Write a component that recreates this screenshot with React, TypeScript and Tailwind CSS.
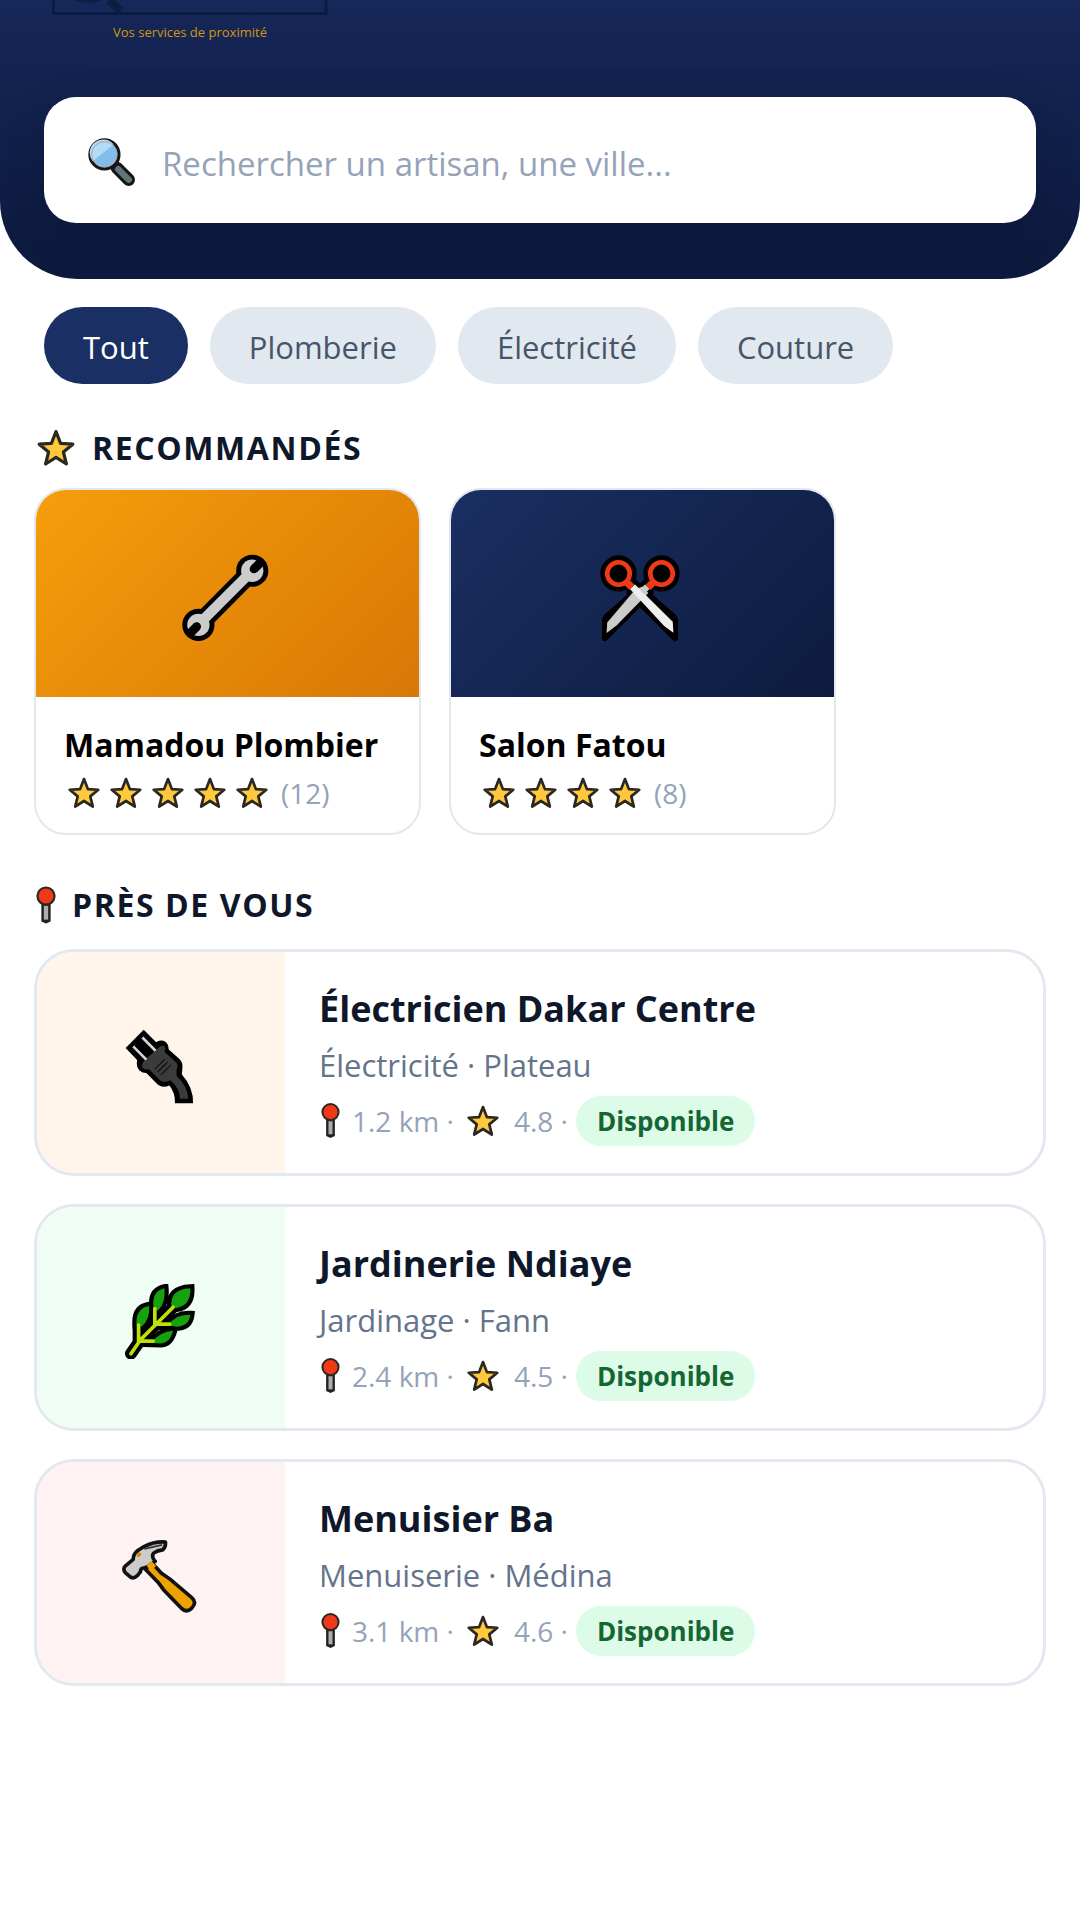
import { useState } from "react";

type IconProps = { className?: string };

const categories = ["Tout", "Plomberie", "Électricité", "Couture"];

const recommended = [
  {
    id: 1,
    name: "Mamadou Plombier",
    stars: 5,
    reviews: 12,
    Icon: WrenchIcon,
    bg: "bg-linear-135 from-[#f59e0b] to-[#d97706]",
  },
  {
    id: 2,
    name: "Salon Fatou",
    stars: 4,
    reviews: 8,
    Icon: ScissorsIcon,
    bg: "bg-linear-135 from-[#1a2f63] to-[#0d1b3e]",
  },
];

const nearby = [
  {
    id: 1,
    name: "Électricien Dakar Centre",
    info: "Électricité · Plateau",
    distance: "1.2 km",
    rating: "4.8",
    Icon: PlugIcon,
    bg: "bg-[#fff5eb]",
  },
  {
    id: 2,
    name: "Jardinerie Ndiaye",
    info: "Jardinage · Fann",
    distance: "2.4 km",
    rating: "4.5",
    Icon: LeafIcon,
    bg: "bg-[#f0fdf4]",
  },
  {
    id: 3,
    name: "Menuisier Ba",
    info: "Menuiserie · Médina",
    distance: "3.1 km",
    rating: "4.6",
    Icon: HammerIcon,
    bg: "bg-[#fef2f2]",
  },
];

function StarIcon({ className }: IconProps) {
  return (
    <svg viewBox="0 0 100 100" className={className} aria-hidden="true">
      <path
        d="M50 9 61.5 38.6 92 40.4 68.5 60 76 90 50 73.5 24 90 31.5 60 8 40.4 38.5 38.6Z"
        fill="#ffc83d"
        stroke="#2b2822"
        strokeWidth="8"
        strokeLinejoin="round"
      />
    </svg>
  );
}

function PinIcon({ className }: IconProps) {
  return (
    <svg viewBox="0 0 56 104" className={className} aria-hidden="true">
      <path d="M15 44H41V98L28 104 15 98Z" fill="#222" />
      <path d="M22 54H34V93H22Z" fill="#adadad" />
      <circle cx="28" cy="27" r="24" fill="#f03a17" stroke="#2b2822" strokeWidth="6" />
    </svg>
  );
}

function SearchIcon({ className }: IconProps) {
  return (
    <svg viewBox="262 411 146 150" className={className} aria-hidden="true">
      <path d="M350 504 386 540" stroke="#151515" strokeWidth="38" strokeLinecap="round" />
      <path d="M354 508 386 540" stroke="#5f7378" strokeWidth="20" strokeLinecap="round" />
      <circle cx="312" cy="463" r="44" fill="#82bdee" stroke="#151515" strokeWidth="10" />
      <path d="M276 484A40 40 0 0 1 340 433Z" fill="#b3daf6" />
      <circle cx="312" cy="463" r="39" fill="none" stroke="#a9a39d" strokeWidth="3" />
    </svg>
  );
}

function WrenchIcon({ className }: IconProps) {
  return (
    <svg viewBox="540 252 268 266" className={className} aria-hidden="true">
      <circle cx="757" cy="302" r="49" />
      <circle cx="593" cy="467" r="49" />
      <path d="M593 467 757 302" stroke="#000" strokeWidth="58" />
      <path d="M605 454 744 315" stroke="#ccc" strokeWidth="31" />
      <circle cx="757" cy="302" r="34" fill="#ccc" />
      <circle cx="593" cy="467" r="34" fill="#ccc" />
      <path d="M762 297 784 275M588 472 566 494" stroke="#000" strokeWidth="27" />
      <circle cx="762" cy="297" r="13" />
      <circle cx="588" cy="472" r="13" />
    </svg>
  );
}

function ScissorsIcon({ className }: IconProps) {
  return (
    <svg viewBox="509 252 244 266" className={className} aria-hidden="true">
      <circle cx="566" cy="311" r="55" />
      <circle cx="696" cy="311" r="55" />
      <path d="M590 345 610 322 738 435Q746 442 746 452V510Q740 520 730 512L590 372Z" />
      <path d="M672 345 652 322 524 435Q516 442 516 452V510Q522 520 532 512L672 372Z" />
      <path d="M618 358 640 350 656 370 560 468 530 491 532 459Z" fill="#ccc" />
      <path d="M600 357 616 344 730 457 732 490 704 470Z" fill="#eee" />
      <path d="M660 357 646 344 630 360 644 374Z" fill="#ccc" />
      <path d="M590 337 607 353M672 337 655 353" stroke="#f03a17" strokeWidth="22" />
      <circle cx="566" cy="311" r="34" stroke="#f03a17" strokeWidth="14" />
      <circle cx="696" cy="311" r="34" stroke="#f03a17" strokeWidth="14" />
    </svg>
  );
}

function PlugIcon({ className }: IconProps) {
  return (
    <svg viewBox="374 508 208 228" className={className} aria-hidden="true">
      <path d="M430 510 375 566 410 602Q406 622 417 634Q426 642 438 642L468 672Q484 690 508 680Q526 702 525 734H580Q582 686 546 646L548 622Q548 608 537 598L506 570Q506 550 490 544Q476 540 468 548Z" />
      <path
        d="M436 600 471 569Q482 556 493 560Q498 568 493 578L524 605Q538 616 530 630L530 650Q564 682 565 720H540Q540 688 511 664Q490 675 478 662L446 630Q432 634 425 624Q424 610 436 600Z"
        fill="#3b3b3b"
      />
      <path d="M426 534 466 574M398 561 438 601" stroke="#d4d4d4" strokeWidth="8" />
      <path d="M464 630 494 600M473 638 503 608M483 647 513 617" stroke="#111" strokeWidth="4" />
    </svg>
  );
}

function LeafIcon({ className }: IconProps) {
  const leaves =
    "M455 322Q448 268 512 265Q514 318 470 324ZM402 328Q392 275 434 265Q438 310 415 331ZM350 378Q345 325 388 318Q390 360 365 380ZM445 376Q470 342 512 345Q508 380 470 381ZM394 430Q420 395 460 393Q450 430 425 431Z";
  const stems = "M333 462 362 420 460 322M405 326V373H450M356 376V424H400";
  return (
    <svg viewBox="312 252 214 226" className={className} aria-hidden="true">
      <path d={leaves} stroke="#000" strokeWidth="25" />
      <path d={stems} stroke="#000" strokeWidth="36" fill="none" strokeLinecap="round" />
      <path d={leaves} fill="#16a20c" />
      <path d={stems} stroke="#bfdf0a" strokeWidth="11" fill="none" strokeLinecap="round" />
    </svg>
  );
}

function HammerIcon({ className }: IconProps) {
  return (
    <svg viewBox="304 264 228 224" className={className} aria-hidden="true">
      <path
        d="M396 336 424 366 450 384 516 440Q532 454 518 470Q504 488 486 474L430 416 414 394 375 354Z"
        fill="#eda200"
        stroke="#111"
        strokeWidth="11"
        strokeLinejoin="round"
      />
      <path
        d="M436 271Q402 269 371 285L352 297Q338 308 338 324L313 345Q306 354 314 364L330 378Q340 384 350 374L360 362Q360 350 370 350L380 347 405 330Q392 316 400 305Q412 296 428 295Q438 286 436 271Z"
        fill="#ccc"
        stroke="#111"
        strokeWidth="11"
        strokeLinejoin="round"
      />
      <path d="M379 342 394 330 408 344 390 360Z" fill="#eda200" />
      <path d="M350 314 360 305" stroke="#c98a00" strokeWidth="12" />
      <path d="M372 292 426 280" stroke="#333" strokeWidth="5" />
    </svg>
  );
}

function LogoFrame({ className }: IconProps) {
  return (
    <svg viewBox="0 0 276 16" className={className} aria-hidden="true">
      <path d="M1.5 0V13.5H274V0" fill="none" stroke="#0a1c45" strokeWidth="3" />
      <path d="M23 0Q36 6 50 0Z" fill="#08213f" />
      <path d="M57 0 69 11" stroke="#08213f" strokeWidth="8" />
    </svg>
  );
}

export default function App() {
  const [active, setActive] = useState("Tout");
  const [search, setSearch] = useState("");

  return (
    <div className="min-h-screen bg-white font-['Open_Sans','Noto_Sans',sans-serif]">
      <header className="rounded-b-[78px] bg-linear-to-b from-[#162759] to-[#0c193c] px-11 pb-14">
        <div className="ml-2 flex w-[276px] flex-col items-center">
          <LogoFrame className="h-4 w-full" />
          <p className="mt-1.5 mb-[55px] text-[13px] leading-5 text-[#d4950f]">
            Vos services de proximité
          </p>
        </div>

        <label className="flex h-[126px] items-center gap-[26px] rounded-[32px] bg-white px-11 pt-1 shadow-[0_10px_40px_rgba(0,0,0,0.15)]">
          <SearchIcon className="h-[50px] w-12 shrink-0" />
          <input
            type="text"
            aria-label="Rechercher"
            value={search}
            onChange={(e) => setSearch(e.target.value)}
            placeholder="Rechercher un artisan, une ville..."
            className="min-w-0 flex-1 bg-transparent pt-1 text-[33px] text-[#1e293b] outline-none placeholder:text-[#94a3b8]"
          />
        </label>
      </header>

      <nav className="flex gap-[22px] overflow-hidden px-11 pt-7">
        {categories.map((c) => (
          <button
            key={c}
            type="button"
            onClick={() => setActive(c)}
            className={`h-[77px] shrink-0 rounded-full px-[39px] pt-1 text-[31px] ${
              active === c ? "bg-[#1a2f63] text-white" : "bg-[#e2e8f0] text-[#475569]"
            }`}
          >
            {c}
          </button>
        ))}
      </nav>

      <main className="px-[34px] pb-14">
        <section className="pt-10">
          <h2 className="mb-4 flex h-12 items-center gap-4 pl-0.5 text-[32px] font-bold tracking-wider text-[#0f172a]">
            <StarIcon className="size-10" />
            RECOMMANDÉS
          </h2>
          <div className="flex gap-7 overflow-hidden">
            {recommended.map(({ id, name, stars, reviews, Icon, bg }) => (
              <article
                key={id}
                className="w-[387px] shrink-0 overflow-hidden rounded-[32px] border-2 border-[#e2e8f0] bg-white"
              >
                <div className={`flex h-[207px] items-center justify-center pt-2 pr-1.5 ${bg}`}>
                  <Icon className="h-[88px] w-[88px]" />
                </div>
                <div className="px-7 pt-6 pb-4">
                  <h3 className="text-[32px] leading-[48px] font-bold whitespace-nowrap text-black">
                    {name}
                  </h3>
                  <p className="flex h-12 items-center gap-2 pl-[3px] text-[28px] text-[#94a3b8]">
                    {Array.from({ length: stars }).map((_, i) => (
                      <StarIcon key={i} className="size-[34px]" />
                    ))}
                    <span className="pl-1">({reviews})</span>
                  </p>
                </div>
              </article>
            ))}
          </div>
        </section>

        <section className="pt-[46px]">
          <h2 className="mb-5 flex h-12 items-center gap-4 pl-0.5 text-[32px] font-bold tracking-wider text-[#0f172a]">
            <PinIcon className="h-[38px] w-5" />
            PRÈS DE VOUS
          </h2>
          <div className="flex flex-col gap-7">
            {nearby.map(({ id, name, info, distance, rating, Icon, bg }) => (
              <article
                key={id}
                className="flex h-[227px] overflow-hidden rounded-[40px] border-[3px] border-[#e2e8f0] bg-white"
              >
                <div
                  className={`flex w-[248px] shrink-0 items-center justify-center pt-2 pr-1 ${bg}`}
                >
                  <Icon className="h-[75px] w-[75px]" />
                </div>
                <div className="flex flex-col justify-center pt-1 pl-[34px]">
                  <h3 className="text-[36px] leading-[56px] font-bold text-[#0f172a]">{name}</h3>
                  <p className="text-[31px] leading-[56px] text-[#64748b]">{info}</p>
                  <p className="flex h-14 items-center text-[28px] text-[#94a3b8]">
                    <PinIcon className="mr-3 ml-0.5 h-[35px] w-[19px]" />
                    {distance} ·
                    <StarIcon className="mr-3.5 ml-3 size-[34px]" />
                    {rating} ·
                    <span className="ml-2 flex h-[50px] items-center rounded-full bg-[#dcfce7] px-[21px] pt-0.5 text-[26px] font-bold text-[#166534]">
                      Disponible
                    </span>
                  </p>
                </div>
              </article>
            ))}
          </div>
        </section>
      </main>
    </div>
  );
}
